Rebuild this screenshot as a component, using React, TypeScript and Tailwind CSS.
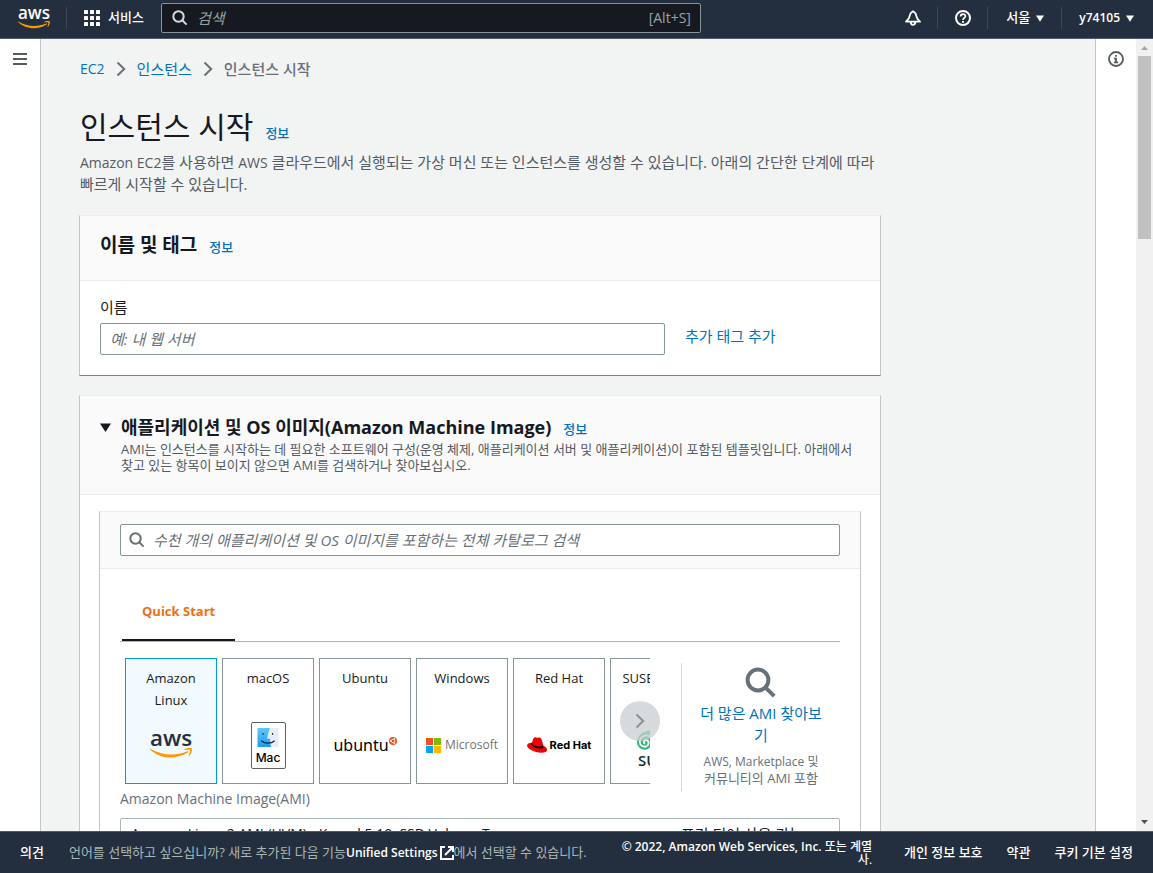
import type { ReactNode } from "react";

const FONT = "font-['Open_Sans','Noto_Sans_CJK_KR',sans-serif]";

function AwsLogo({ className, letters }: { className: string; letters: string }) {
  return (
    <svg viewBox="0 0 24 16" className={`overflow-visible ${className}`} role="img" aria-label="AWS">
      <text x="12" y="8.400" textAnchor="middle" fontSize="12.800" fontWeight="550" fill={letters}>
        aws
      </text>
      <g fill="#ff9900" transform="translate(0 -4)">
        <path d="M21.698 16.207c-2.626 1.94-6.442 2.969-9.722 2.969-4.598 0-8.74-1.7-11.87-4.526-.247-.223-.024-.527.272-.351 3.384 1.963 7.559 3.153 11.877 3.153 2.914 0 6.114-.607 9.06-1.852.439-.2.814.287.383.607z" />
        <path d="M22.792 14.961c-.336-.43-2.22-.207-3.074-.103-.255.032-.295-.192-.063-.36 1.5-1.053 3.967-.75 4.254-.399.287.36-.08 2.826-1.485 4.007-.215.184-.423.088-.327-.151.32-.79 1.03-2.57.695-2.994z" />
      </g>
    </svg>
  );
}

function SearchIcon({ className }: { className: string }) {
  return (
    <svg viewBox="0 0 16 16" className={className} fill="none" stroke="currentColor" strokeWidth="2" aria-hidden="true">
      <circle cx="6.500" cy="6.500" r="5.2" />
      <path d="M10.3 10.3 14.600 14.600" />
    </svg>
  );
}

function Caret({ className }: { className: string }) {
  return (
    <svg viewBox="0 0 10 8" className={className} fill="currentColor" aria-hidden="true">
      <path d="M0 .3h10L5 8z" />
    </svg>
  );
}

function Chevron({ className }: { className: string }) {
  return (
    <svg viewBox="0 0 10 16" className={className} fill="none" stroke="currentColor" strokeWidth="2" aria-hidden="true">
      <path d="M1.5 1.5 8.2 8l-6.7 6.5" />
    </svg>
  );
}

function Separator() {
  return <span className="h-[22px] w-px bg-[#414750]" />;
}

function InfoLink() {
  return (
    <a href="#info" className="text-[13px] font-medium leading-5 text-[#0073bb]">
      정보
    </a>
  );
}

function TopBar() {
  return (
    <header className="flex h-[39px] shrink-0 items-start border-b border-[#545b64] bg-[#232f3e] pr-[19px] pl-[18px] text-[13px] text-white">
      <a href="#home" className="pt-2">
        <AwsLogo className="w-8" letters="#ffffff" />
      </a>
      <div className="ml-4 flex h-9 items-center">
        <Separator />
        <button className="ml-[17px] flex items-center gap-2 font-medium">
          <svg viewBox="0 0 16 16" className="size-4" fill="currentColor" aria-hidden="true">
            {[0, 6, 12].map((y) => [0, 6, 12].map((x) => <rect key={`${x}-${y}`} x={x} y={y} width="4" height="4" rx=".6" />))}
          </svg>
          서비스
        </button>
      </div>
      <label className="mt-[3px] ml-[17px] flex h-[30px] w-[540px] items-center rounded-xs border border-[#879596] bg-[#16191f] px-[9px] text-[#95a5a6]">
        <SearchIcon className="ml-px size-4 text-[#d5dbdb]" />
        <input
          type="search"
          aria-label="검색"
          placeholder="검색"
          className="ml-[9px] min-w-0 flex-1 bg-transparent text-[15px] italic outline-none placeholder:text-[#95a5a6]"
        />
        <span className="text-sm">[Alt+S]</span>
      </label>
      <div className="ml-auto flex h-9 items-center font-medium">
        <button aria-label="알림">
          <svg viewBox="0 0 16 16" className="size-4" fill="none" stroke="currentColor" strokeWidth="1.8" strokeLinejoin="round" aria-hidden="true">
            <path d="M8 1.200 7 2C5.400 2.800 4.900 4 4.700 5.800c-.3 2.500-1.500 4.100-3.700 5.900h14c-2.200-1.800-3.400-3.400-3.700-5.900C11.100 4 10.600 2.800 9 2z" />
            <path d="M5.800 12a2.200 2.900 0 0 0 4.400 0" />
          </svg>
        </button>
        <span className="mr-[17px] ml-4 flex">
          <Separator />
        </span>
        <button aria-label="도움말">
          <svg viewBox="0 0 16 16" className="size-4" fill="none" stroke="currentColor" strokeWidth="2" aria-hidden="true">
            <circle cx="8" cy="8" r="7" />
            <path d="M5.600 6.500C5.600 3.400 10.400 3.400 10.400 6.300 10.400 8 8 7.800 8 10" strokeWidth="1.700" />
            <path d="M8 11v1.800" />
          </svg>
        </button>
        <span className="mr-[18px] ml-4 flex">
          <Separator />
        </span>
        <button className="flex items-center gap-[6px]">
          서울
          <Caret className="h-[7px] w-2" />
        </button>
        <span className="mx-[17px] flex">
          <Separator />
        </span>
        <button className="flex items-center gap-[6px] text-xs font-semibold">
          y74105
          <Caret className="h-[7px] w-2" />
        </button>
      </div>
    </header>
  );
}

function FinderIcon() {
  return (
    <svg viewBox="0 0 22 20" className="w-[22px]" aria-hidden="true">
      <defs>
        <linearGradient id="finder-face" x1="0" y1="0" x2="0" y2="1">
          <stop offset="0" stopColor="#5fc8f8" />
          <stop offset="1" stopColor="#1a9cf0" />
        </linearGradient>
      </defs>
      <rect width="22" height="20" fill="#e6edf6" />
      <path d="M0 0h13.200C11.600 3.400 10.400 7.500 10.200 11.200h3c-.1 3 .2 6 1 8.800H0z" fill="url(#finder-face)" />
      <path d="M5.800 5.200v2M15.800 5.200v2" stroke="#14202e" strokeWidth="1.200" />
      <path d="M4 13.400c3.800 3.400 10.200 3.400 14 0" fill="none" stroke="#14202e" strokeWidth="1.200" />
    </svg>
  );
}

function UbuntuMark() {
  return (
    <svg viewBox="0 0 16 16" className="mb-2 size-2 shrink-0" aria-hidden="true">
      <circle cx="8" cy="8" r="8" fill="#e95420" />
      <circle cx="8.200" cy="8" r="3.600" fill="none" stroke="#ffffff" strokeWidth="1.600" />
      <circle cx="3.200" cy="8" r="1.400" fill="#ffffff" />
      <circle cx="10.600" cy="3.600" r="1.400" fill="#ffffff" />
      <circle cx="10.600" cy="12.400" r="1.400" fill="#ffffff" />
    </svg>
  );
}

function RedHatMark() {
  return (
    <svg viewBox="0 0 20 16" className="w-5 shrink-0" aria-hidden="true">
      <path d="M4.600 5.800C2 6 0 6.800 0 8.600c0 3.200 7.600 7.200 14.200 7.200 4 0 5.800-1.300 5.800-3.100 0-1.600-1.500-3-3.700-4z" fill="#ee0000" />
      <path d="M4.300 7.600 5 5l11.200 3.200.3 2.200C13.500 12.900 5.500 10.600 4.300 7.600z" fill="#000000" />
      <path d="M5.600 3.700C6.200 1.600 6.900.1 8.300.3c1 .2 1.600.8 2.600.4 1.800-.7 3.500.4 4.100 2.700l1.200 4.700c-1 2.600-9.900 1.100-11.400-1.700z" fill="#ee0000" />
    </svg>
  );
}

function SuseMark() {
  return (
    <svg viewBox="0 0 38 20" className="w-[38px]" aria-hidden="true">
      <path d="M0 12C.5 5 6 .8 14 .4 26 0 34 4 38 9v4c-5 3-14 2-20 2z" fill="#30ba78" />
      <circle cx="7.600" cy="12.200" r="7.600" fill="#30ba78" />
      <path d="M14.600 8.500C12 3.800 3.800 4.600 2.900 11c-.6 4.200 3.300 6.800 6.700 5.200 3-1.500 2.500-5.900-.6-6-2.400-.1-2.800 2.900-.9 3.500" fill="none" stroke="#ffffff" strokeWidth="1.700" />
    </svg>
  );
}

function Tile({ name, selected, children }: { name: string; selected?: boolean; children: ReactNode }) {
  return (
    <button
      aria-pressed={selected ?? false}
      className={`flex h-[126px] w-[92px] shrink-0 flex-col items-center border px-2 pt-2 pb-[14px] text-[13px] leading-[22px] text-[#16191f] ${
        selected ? "border-[#00a1c9] bg-[#f1faff]" : "border-[#879596] bg-white"
      }`}
    >
      <span>{name}</span>
      <span className="mt-auto flex h-12 items-center justify-center">{children}</span>
    </button>
  );
}

function QuickStartTiles() {
  return (
    <div className="relative">
      <div className="flex gap-[5px] overflow-hidden pl-[5px]">
        <Tile name="Amazon Linux" selected>
          <AwsLogo className="w-[42px]" letters="#232f3e" />
        </Tile>
        <Tile name="macOS">
          <span className="flex h-[47px] w-[35px] flex-col items-center rounded-xs border border-[#5f6368] pt-[5px] font-['Inter',sans-serif] text-xs leading-[21px] font-medium text-black">
            <FinderIcon />
            Mac
          </span>
        </Tile>
        <Tile name="Ubuntu">
          <span className="flex items-center font-['Noto_Sans',sans-serif] text-base text-black">
            ubuntu
            <UbuntuMark />
          </span>
        </Tile>
        <Tile name="Windows">
          <span className="flex items-center gap-1 text-xs text-[#737373]">
            <svg viewBox="0 0 15 15" className="size-[15px] shrink-0" aria-hidden="true">
              <path fill="#f25022" d="M0 0h7v7H0z" />
              <path fill="#7fba00" d="M8 0h7v7H8z" />
              <path fill="#00a4ef" d="M0 8h7v7H0z" />
              <path fill="#ffb900" d="M8 8h7v7H8z" />
            </svg>
            <span className="font-medium">Microsoft</span>
          </span>
        </Tile>
        <Tile name="Red Hat">
          <span className="flex items-center gap-[3px] font-['Inter',sans-serif] text-[11px] font-bold whitespace-nowrap text-black">
            <RedHatMark />
            Red Hat
          </span>
        </Tile>
        <Tile name="SUSE Linux">
          <span className="flex flex-col items-center gap-0.5 pt-2 text-[15px] leading-4 font-semibold text-[#0c322c]">
            <SuseMark />
            SUSE
          </span>
        </Tile>
      </div>
      <button
        aria-label="다음"
        className="absolute top-[43px] -right-[10px] flex size-10 items-center justify-center rounded-full bg-[#c8ced0]/75 text-[#879196]"
      >
        <Chevron className="h-4 w-[10px]" />
      </button>
    </div>
  );
}

function NameCard() {
  return (
    <section className="mt-5 border border-t-[#eaeded] border-r-[#c1c7c9] border-b-[#798587] border-l-[#c1c7c9] bg-white">
      <div className="flex h-[65px] items-baseline gap-3 border-b border-[#eaeded] bg-[#fafafa] px-5 pt-4">
        <h2 className="text-[19px] leading-[26px] font-bold">이름 및 태그</h2>
        <InfoLink />
      </div>
      <div className="flex items-end gap-5 px-5 pt-[15px] pb-5">
        <div className="flex flex-1 flex-col gap-[5px]">
          <label htmlFor="instance-name" className="text-[15px] leading-[22px]">
            이름
          </label>
          <input
            id="instance-name"
            placeholder="예: 내 웹 서버"
            className="h-8 rounded-xs border border-[#879596] px-[9px] text-[15px] italic outline-none placeholder:text-[#687078]"
          />
        </div>
        <a href="#tags" className="mb-2 w-[175px] text-[15px] leading-[22px] text-[#0073bb]">
          추가 태그 추가
        </a>
      </div>
    </section>
  );
}

function ImageCard() {
  return (
    <section className="mt-[19px] border border-t-[#eaeded] border-r-[#c1c7c9] border-b-[#798587] border-l-[#c1c7c9] bg-white">
      <div className="flex items-start border-b border-[#eaeded] bg-[#fafafa] pt-[18px] pr-5 pb-[21px] pl-5">
        <button aria-label="섹션 접기" className="flex h-[26px] w-[21px] shrink-0 items-center">
          <Caret className="h-[9px] w-[11px]" />
        </button>
        <div>
          <div className="flex items-baseline gap-3">
            <h2 className="text-[18px] leading-[26px] font-bold">애플리케이션 및 OS 이미지(Amazon Machine Image)</h2>
            <InfoLink />
          </div>
          <p className="mt-px text-[13px] leading-4 text-[#545b64]">
            AMI는 인스턴스를 시작하는 데 필요한 소프트웨어 구성(운영 체제, 애플리케이션 서버 및 애플리케이션)이 포함된 템플릿입니다. 아래에서
            <br />
            찾고 있는 항목이 보이지 않으면 AMI를 검색하거나 찾아보십시오.
          </p>
        </div>
      </div>
      <div className="px-[19px] pt-4 pb-5">
        <div className="border border-t-[#eaeded] border-r-[#c1c7c9] border-b-[#798587] border-l-[#c1c7c9]">
          <div className="border-b border-[#eaeded] bg-[#fafafa] px-5 py-3">
            <label className="flex h-8 items-center rounded-xs border border-[#879596] bg-white px-2">
              <SearchIcon className="size-4 text-[#687078]" />
              <input
                type="search"
                aria-label="AMI 검색"
                placeholder="수천 개의 애플리케이션 및 OS 이미지를 포함하는 전체 카탈로그 검색"
                className="ml-2 min-w-0 flex-1 bg-transparent text-[15px] italic outline-none placeholder:text-[#687078]"
              />
            </label>
          </div>
          <div className="px-5 pt-7 pb-5">
            <div role="tablist" className="flex border-b border-[#aab7b8] pl-0.5">
              <button role="tab" aria-selected="true" className="h-11 border-b-2 border-[#16191f] px-5 pt-1 pb-4 text-[13px] font-bold text-[#ec7211]">
                Quick Start
              </button>
            </div>
            <div className="mt-4 flex">
              <div className="min-w-0 flex-1">
                <QuickStartTiles />
                <p className="mt-1 text-sm leading-[22px] text-[#687078]">Amazon Machine Image(AMI)</p>
              </div>
              <div className="mt-[5px] ml-[31px] flex h-32 w-[159px] flex-col items-center border-l border-[#d5dbdb] px-3 pt-1 text-center">
                <SearchIcon className="size-8 text-[#687078]" />
                <a href="#more-amis" className="mt-[3px] text-[15px] leading-[22px] text-[#0073bb]">
                  더 많은 AMI 찾아보기
                </a>
                <p className="mt-2 text-xs leading-4 text-[#687078]">AWS, Marketplace 및</p>
                <p className="text-[13px] leading-4 whitespace-nowrap text-[#687078]">커뮤니티의 AMI 포함</p>
              </div>
            </div>
            <button className="mt-2 flex w-full items-start rounded-xs border border-[#aab7b8] px-[10px] py-1 text-left text-sm leading-[22px]">
              <span className="flex-1">Amazon Linux 2 AMI (HVM) - Kernel 5.10, SSD Volume Type</span>
              <span className="w-[148px] text-[15px]">프리 티어 사용 가능</span>
            </button>
          </div>
        </div>
      </div>
    </section>
  );
}

function Footer() {
  return (
    <footer className="flex h-[42px] shrink-0 items-center border-t border-[#545b64] bg-[#232f3e] px-5 text-[13px] text-white">
      <a href="#feedback" className="font-medium">
        의견
      </a>
      <p className="ml-[25px] flex items-center whitespace-nowrap text-[#aab7b8]">
        언어를 선택하고 싶으십니까? 새로 추가된 다음 기능
        <a href="#settings" className="flex items-center gap-0.5 text-xs font-semibold text-white">
          Unified Settings
          <svg viewBox="0 0 14 14" className="size-[14px]" fill="none" stroke="currentColor" strokeWidth="2" aria-hidden="true">
            <path d="M5 1H1v12h12V9M8 1h5v5M13 1 5 9" />
          </svg>
        </a>
        에서 선택할 수 있습니다.
      </p>
      <div className="ml-auto flex items-center gap-6 font-medium whitespace-nowrap">
        <p className="mr-2 text-right text-xs leading-[13px]">
          <span className="font-semibold">© 2022, Amazon Web Services, Inc.</span> 또는 계열
          <br />
          사.
        </p>
        <a href="#privacy">개인 정보 보호</a>
        <a href="#terms">약관</a>
        <a href="#cookies">쿠키 기본 설정</a>
      </div>
    </footer>
  );
}

export default function App() {
  return (
    <div className={`flex h-screen flex-col overflow-hidden bg-[#f2f3f3] text-[#16191f] ${FONT}`}>
      <TopBar />
      <div className="flex min-h-0 flex-1">
        <nav className="w-[41px] shrink-0 border-r border-[#c1c7c9] bg-white pt-[14px] pl-[13px] text-[#545b64]">
          <button aria-label="메뉴 열기" className="flex">
            <svg viewBox="0 0 14 12" className="h-3 w-[14px]" fill="currentColor" aria-hidden="true">
              <path d="M0 0h14v2H0zM0 5h14v2H0zM0 10h14v2H0z" />
            </svg>
          </button>
        </nav>
        <main className="min-w-0 flex-1 overflow-y-auto pr-5 pl-[38px] [scrollbar-width:none]">
          <div className="w-full max-w-[802px] pt-[19px] pb-10">
            <nav aria-label="탐색 경로" className="flex items-center gap-[11px] pl-px text-[15px] leading-[22px] text-[#687078]">
              <a href="#ec2" className="text-sm leading-[22px] text-[#0073bb]">
                EC2
              </a>
              <Chevron className="h-4 w-[10px]" />
              <a href="#instances" className="text-[#0073bb]">
                인스턴스
              </a>
              <Chevron className="h-4 w-[10px]" />
              <span className="font-medium">인스턴스 시작</span>
            </nav>
            <div className="mt-[27px] flex items-baseline gap-3 pl-px">
              <h1 className="text-[30px] leading-10">인스턴스 시작</h1>
              <InfoLink />
            </div>
            <p className="mt-1 pl-px text-[15px] leading-[22px] text-[#545b64]">
              <span className="text-sm leading-none">Amazon EC2</span>를 사용하면 <span className="text-sm leading-none">AWS</span>{" "}
              클라우드에서 실행되는 가상 머신 또는 인스턴스를 생성할 수 있습니다. 아래의 간단한 단계에 따라
              <br />
              빠르게 시작할 수 있습니다.
            </p>
            <NameCard />
            <ImageCard />
          </div>
        </main>
        <aside className="w-[41px] shrink-0 border-l border-[#c1c7c9] bg-white pt-3 pl-3 text-[#545b64]">
          <button aria-label="정보 패널 열기" className="flex">
            <svg viewBox="0 0 16 16" className="size-4" fill="none" stroke="currentColor" strokeWidth="1.800" aria-hidden="true">
              <circle cx="8" cy="8" r="7" />
              <path d="M8 4v1.800M6 7.700h2v3.600M6 11.300h4.200" />
            </svg>
          </button>
        </aside>
        <div aria-hidden="true" className="flex w-[17px] shrink-0 flex-col items-center bg-[#f1f1f1]">
          <svg viewBox="0 0 17 17" className="size-[17px]" fill="#a3a3a3">
            <path d="M8.500 7 12 11H5z" />
          </svg>
          <div className="h-[183px] w-[13px] bg-[#c1c1c1]" />
          <svg viewBox="0 0 17 17" className="mt-auto size-[17px]" fill="#505050">
            <path d="M5 6h7l-3.500 4z" />
          </svg>
        </div>
      </div>
      <Footer />
    </div>
  );
}
